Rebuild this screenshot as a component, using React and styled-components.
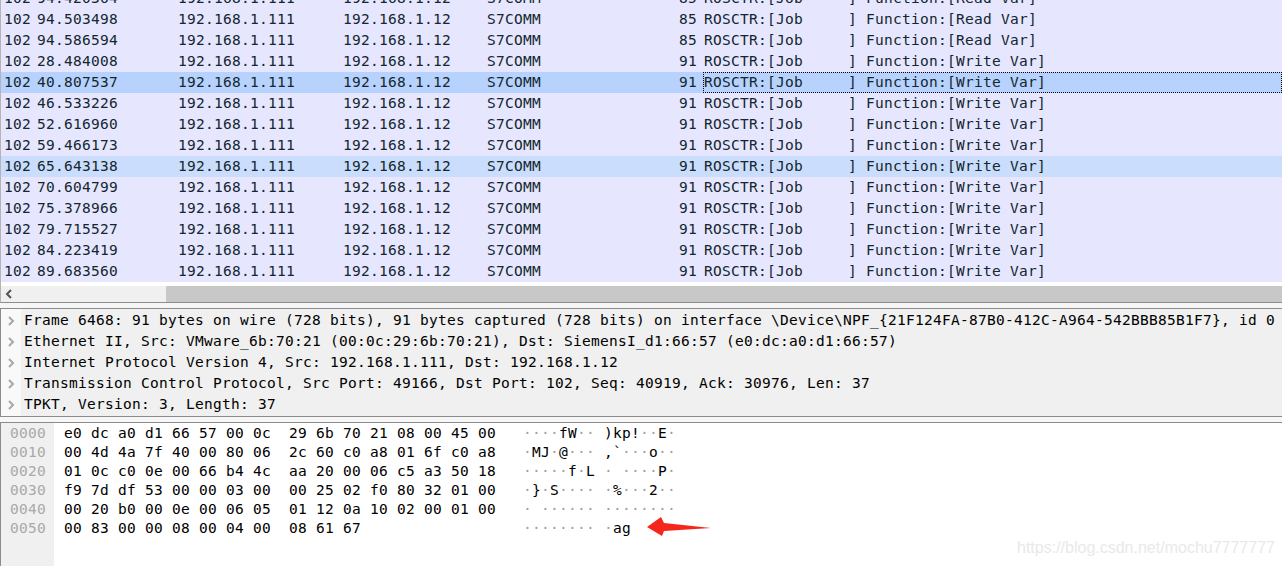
import React from 'react';
import styled, { createGlobalStyle } from 'styled-components';

const Global = createGlobalStyle`
  html, body { margin: 0; padding: 0; background: #fff; }
  #root { height: 566px; width: 1282px; overflow: hidden; }
`;

const Page = styled.div`
  position: relative;
  width: 1282px;
  height: 566px;
  display: flex;
  flex-direction: column;
  overflow: hidden;
  background: #fff;
  font-family: "DejaVu Sans Mono", monospace;
  font-size: 14.5px;
  letter-spacing: 0.27px;
  color: #000;
`;

const ListPane = styled.section`
  height: 303px;
  flex: none;
  display: flex;
  flex-direction: column;
  overflow: hidden;
  border-left: 1px solid #b4b4b4;
  border-bottom: 1px solid #8c8c8c;
  box-sizing: border-box;
`;

const Rows = styled.div`
  margin-top: -12px;
  flex: none;
`;

const Row = styled.div`
  display: grid;
  grid-template-columns: 36px 141px 165px 144px 100px 116px 1fr;
  height: 21px;
  line-height: 21px;
  white-space: pre;
  color: #12272e;
  background: ${p => p.$tone === 'selected' ? '#b7d2fd' : p.$tone === 'related' ? '#cbddfc' : '#e7e6ff'};
`;

const Cell = styled.span`
  padding-left: ${p => p.$first ? '3px' : '0'};
`;

const LengthCell = styled.span`
  text-align: right;
  padding-right: 6px;
`;

const InfoCell = styled.span`
  box-sizing: border-box;
  height: 21px;
  line-height: 19px;
  border: 1px dotted ${p => p.$focus ? '#000' : 'transparent'};
`;

const ScrollArea = styled.div`
  margin-top: 4px;
  height: 16px;
  display: flex;
  background: #f0f0f0;
  flex: none;
`;

const ScrollButton = styled.div`
  width: 21px;
  height: 16px;
  display: flex;
  align-items: center;
  justify-content: center;
  margin-left: -3px;
`;

const ScrollThumb = styled.div`
  margin-left: 147px;
  flex: 1;
  background: #c8c8c8;
`;

const Gap = styled.div`
  height: 5px;
  flex: none;
  background: #f6f6f6;
`;

const DetailPane = styled.section`
  height: 109px;
  flex: none;
  box-sizing: border-box;
  border-left: 1px solid #8c8c8c;
  border-top: 1px solid #8c8c8c;
  border-bottom: 1px solid #8c8c8c;
  padding-top: 1px;
  background: linear-gradient(to right, #f9f9f9 20px, #f0f0f0 20px);
`;

const DetailRow = styled.div`
  display: flex;
  align-items: center;
  height: 21px;
  line-height: 21px;
  white-space: pre;
  color: #000;
`;

const Expander = styled.span`
  width: 23px;
  flex: none;
  display: flex;
  justify-content: center;
  padding-right: 4px;
  box-sizing: border-box;
`;

const HexPane = styled.section`
  flex: 1;
  display: flex;
  box-sizing: border-box;
  border-left: 1px solid #8c8c8c;
  border-top: 1px solid #8c8c8c;
  min-height: 0;
`;

const Offsets = styled.div`
  width: 53px;
  flex: none;
  background: #f0f0f0;
  color: #a9a9a9;
  padding: 1px 0 0 9px;
  box-sizing: border-box;
`;

const HexBody = styled.div`
  padding: 1px 0 0 10px;
`;

const Line = styled.div`
  height: 19px;
  line-height: 19px;
  white-space: pre;
`;

const HexLine = styled.div`
  display: grid;
  grid-template-columns: 459px 1fr;
  height: 19px;
  line-height: 19px;
  white-space: pre;
`;

const Dot = styled.span`
  color: #a0a0a0;
`;

const Arrow = styled.svg`
  position: absolute;
  left: 645px;
  top: 515px;
`;

const Watermark = styled.div`
  position: absolute;
  left: 1017px;
  top: 539px;
  font-family: "Liberation Sans", Arial, sans-serif;
  font-size: 16px;
  letter-spacing: 0;
  line-height: 18px;
  color: #e9e9e9;
  white-space: nowrap;
`;

const Chevron = ({ dir = 'right', color = '#a8a8a8' }) => (
  <svg width="8" height="10" viewBox="0 0 8 10" fill="none" stroke={color} strokeWidth="2">
    <path d={dir === 'right' ? 'M2 1l4 4-4 4' : 'M6 1L2 5l4 4'} />
  </svg>
);

const rows = [
  ['94.420364', 85, 'Read Var'],
  ['94.503498', 85, 'Read Var'],
  ['94.586594', 85, 'Read Var'],
  ['28.484008', 91, 'Write Var'],
  ['40.807537', 91, 'Write Var', 'selected'],
  ['46.533226', 91, 'Write Var'],
  ['52.616960', 91, 'Write Var'],
  ['59.466173', 91, 'Write Var'],
  ['65.643138', 91, 'Write Var', 'related'],
  ['70.604799', 91, 'Write Var'],
  ['75.378966', 91, 'Write Var'],
  ['79.715527', 91, 'Write Var'],
  ['84.223419', 91, 'Write Var'],
  ['89.683560', 91, 'Write Var'],
];

const details = [
  'Frame 6468: 91 bytes on wire (728 bits), 91 bytes captured (728 bits) on interface \\Device\\NPF_{21F124FA-87B0-412C-A964-542BBB85B1F7}, id 0',
  'Ethernet II, Src: VMware_6b:70:21 (00:0c:29:6b:70:21), Dst: SiemensI_d1:66:57 (e0:dc:a0:d1:66:57)',
  'Internet Protocol Version 4, Src: 192.168.1.111, Dst: 192.168.1.12',
  'Transmission Control Protocol, Src Port: 49166, Dst Port: 102, Seq: 40919, Ack: 30976, Len: 37',
  'TPKT, Version: 3, Length: 37',
];

const hex = [
  'e0 dc a0 d1 66 57 00 0c 29 6b 70 21 08 00 45 00',
  '00 4d 4a 7f 40 00 80 06 2c 60 c0 a8 01 6f c0 a8',
  '01 0c c0 0e 00 66 b4 4c aa 20 00 06 c5 a3 50 18',
  'f9 7d df 53 00 00 03 00 00 25 02 f0 80 32 01 00',
  '00 20 b0 00 0e 00 06 05 01 12 0a 10 02 00 01 00',
  '00 83 00 00 08 00 04 00 08 61 67',
];

const group = line => {
  const b = line.split(' ');
  return b.slice(0, 8).join(' ') + '  ' + b.slice(8).join(' ');
};

const Ascii = ({ line }) => (
  <span>
    {line.split(' ').map((b, i) => {
      const v = parseInt(b, 16);
      const printable = v >= 32 && v < 127;
      return (
        <React.Fragment key={i}>
          {i === 8 ? ' ' : ''}
          {printable ? String.fromCharCode(v) : <Dot>·</Dot>}
        </React.Fragment>
      );
    })}
  </span>
);

export default function App() {
  return (
    <Page>
      <Global />
      <ListPane>
        <Rows>
          {rows.map(([t, len, fn, tone]) => (
            <Row key={t} $tone={tone}>
              <Cell $first>102</Cell>
              <Cell>{t}</Cell>
              <Cell>192.168.1.111</Cell>
              <Cell>192.168.1.12</Cell>
              <Cell>S7COMM</Cell>
              <LengthCell>{len}</LengthCell>
              <InfoCell $focus={tone === 'selected'}>{`ROSCTR:[Job     ] Function:[${fn}]`}</InfoCell>
            </Row>
          ))}
        </Rows>
        <ScrollArea>
          <ScrollButton><Chevron dir="left" color="#555" /></ScrollButton>
          <ScrollThumb />
        </ScrollArea>
      </ListPane>
      <Gap />
      <DetailPane>
        {details.map(d => (
          <DetailRow key={d}>
            <Expander><Chevron /></Expander>
            {d}
          </DetailRow>
        ))}
      </DetailPane>
      <Gap />
      <HexPane>
        <Offsets>
          {hex.map((_, i) => <Line key={i}>{`00${i}0`}</Line>)}
        </Offsets>
        <HexBody>
          {hex.map((l, i) => (
            <HexLine key={i}>
              <span>{group(l)}</span>
              <Ascii line={l} />
            </HexLine>
          ))}
        </HexBody>
      </HexPane>
      <Arrow width="68" height="22" viewBox="0 0 68 22">
        <path d="M2 12L16 2l3 6 47 5-47 3-2 5z" fill="#f5261b" />
      </Arrow>
      <Watermark>https://blog.csdn.net/mochu7777777</Watermark>
    </Page>
  );
}
